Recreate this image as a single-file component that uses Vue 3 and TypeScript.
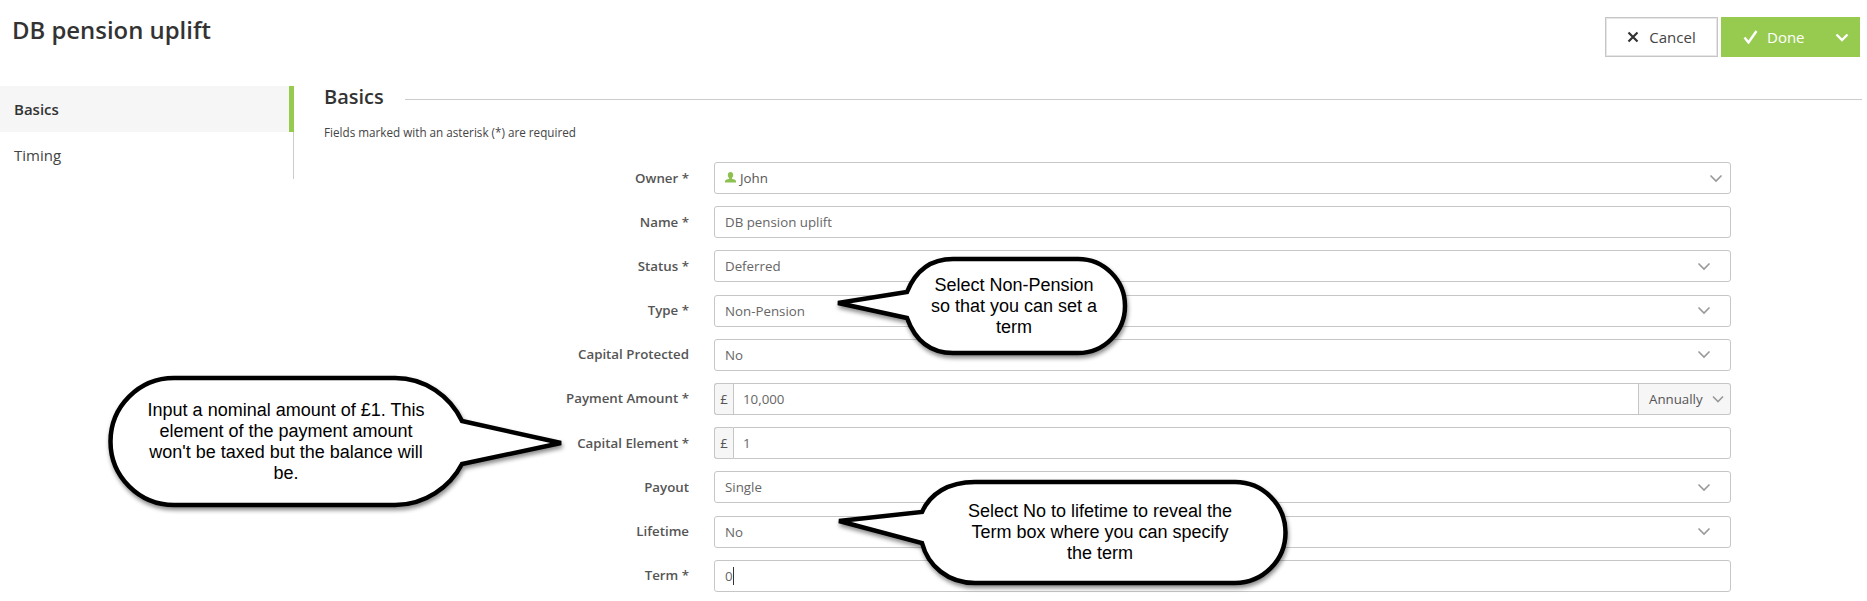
<script setup lang="ts">
interface Row {
  label: string
  kind: 'select' | 'input' | 'money' | 'owner'
  value: string
  period?: string
  caret?: boolean
}
const rows: Row[] = [
  { label: 'Owner *', kind: 'owner', value: 'John' },
  { label: 'Name *', kind: 'input', value: 'DB pension uplift' },
  { label: 'Status *', kind: 'select', value: 'Deferred' },
  { label: 'Type *', kind: 'select', value: 'Non-Pension' },
  { label: 'Capital Protected', kind: 'select', value: 'No' },
  { label: 'Payment Amount *', kind: 'money', value: '10,000', period: 'Annually' },
  { label: 'Capital Element *', kind: 'money', value: '1' },
  { label: 'Payout', kind: 'select', value: 'Single' },
  { label: 'Lifetime', kind: 'select', value: 'No' },
  { label: 'Term *', kind: 'input', value: '0', caret: true },
]
</script>

<template>
  <div class="page">
    <header class="top">
      <h1 class="title">DB pension uplift</h1>
      <div class="actions">
        <button class="btn cancel">
          <svg width="12" height="12" viewBox="0 0 12 12"><path d="M1.500 1.500l9 9M10.500 1.500l-9 9" stroke="#333" stroke-width="2.200" fill="none" /></svg>
          <span>Cancel</span>
        </button>
        <button class="btn done">
          <span class="done-main">
            <svg width="15" height="14" viewBox="0 0 15 14"><path d="M1.500 7.500l4 5L13.500 1" stroke="#fff" stroke-width="2.400" fill="none" /></svg>
            <span>Done</span>
          </span>
          <svg width="14" height="9" viewBox="0 0 14 9"><path d="M1.500 1.500L7 7l5.500-5.500" stroke="#fff" stroke-width="2.400" fill="none" /></svg>
        </button>
      </div>
    </header>
    <div class="body">
      <nav class="side">
        <div class="tab active">Basics</div>
        <div class="tab">Timing</div>
      </nav>
      <main class="content">
        <div class="section">
          <h2>Basics</h2>
          <span class="rule"></span>
        </div>
        <p class="hint">Fields marked with an asterisk (*) are required</p>
        <div class="form">
          <div v-for="r in rows" :key="r.label" class="row">
            <label class="lbl">{{ r.label }}</label>
            <div class="ctl">
              <template v-if="r.kind === 'money'">
                <span class="addon">£</span>
                <span class="field money" :class="{ joined: r.period }">{{ r.value }}</span>
                <span v-if="r.period" class="period">
                  {{ r.period }}
                  <svg width="12" height="8" viewBox="0 0 12 8"><path d="M1 1.500l5 5 5-5" stroke="#999" stroke-width="1.600" fill="none" /></svg>
                </span>
              </template>
              <span v-else class="field">
                <svg v-if="r.kind === 'owner'" class="user" width="11" height="11" viewBox="0 0 11 11"><path d="M5.500 0C7.100 0 8.200 1.300 8.200 3 8.200 4.300 7.600 5.400 6.900 5.900V6.800C8.500 7.300 11 7.800 11 9.200V10.500H0V9.200C0 7.800 2.500 7.300 4.100 6.800V5.900C3.400 5.400 2.800 4.300 2.800 3 2.800 1.300 3.900 0 5.500 0Z" fill="#8cc152" /></svg>
                <span :class="{ dark: r.kind === 'owner', caret: r.caret }">{{ r.value }}</span>
                <svg v-if="r.kind !== 'input'" class="chev" :class="{ far: r.kind === 'owner' }" width="14" height="9" viewBox="0 0 14 9"><path d="M1.500 1.500L7 7l5.500-5.500" stroke="#999" stroke-width="1.600" fill="none" /></svg>
              </span>
            </div>
          </div>
        </div>
      </main>
    </div>

    <svg class="bubbles" width="1867" height="601" viewBox="0 0 1867 601">
      <path d="M907 292C915 272 930 259 953 259H1078A47 47 0 0 1 1078 353H953C930 353 915 340 907 318L838 303Z" />
      <path d="M462 421C450 396 425 378 395 378H174A63.500 63.500 0 0 0 174 505H395C425 505 450 487 462 464L561 443Z" />
      <path d="M922 512C930 494 948 482 975 482H1235A50.500 50.500 0 0 1 1235 583H975C948 583 928 566 922 543L839 521Z" />
    </svg>
    <div class="say say-a">Select Non-Pension<br />so that you can set a<br />term</div>
    <div class="say say-b">Input a nominal amount of £1. This<br />element of the payment amount<br />won't be taxed but the balance will<br />be.</div>
    <div class="say say-c">Select No to lifetime to reveal the<br />Term box where you can specify<br />the term</div>
  </div>
</template>

<style scoped>
.page {
  position: relative;
  width: 1867px;
  height: 601px;
  overflow: hidden;
  background: #fff;
  font-family: "Open Sans", sans-serif;
  font-size: 13.300px;
  color: #333;
}
.top {
  display: flex;
  justify-content: space-between;
  height: 86px;
  padding: 16px 7px 0 12px;
  box-sizing: border-box;
}
.title {
  margin: 0;
  font-size: 23.900px;
  font-weight: 600;
  line-height: 28px;
  color: #333;
}
.actions {
  display: flex;
  gap: 3px;
  height: 40px;
  margin-top: 1px;
}
.btn {
  display: flex;
  align-items: center;
  font: inherit;
  font-size: 15px;
  height: 40px;
  border: 0;
  padding: 0;
}
.cancel {
  width: 113px;
  justify-content: center;
  gap: 10px;
  background: #fff;
  border: 1px solid #c6c6c6;
  box-shadow: inset 0 0 0 1px #e6e6e6;
  color: #444;
}
.done {
  width: 139px;
  background: #97cb4f;
  color: #fff;
  justify-content: space-between;
  padding: 0 11px 0 22px;
  box-sizing: border-box;
}
.done-main {
  display: flex;
  align-items: center;
  gap: 9px;
}
.body {
  display: flex;
}
.side {
  width: 294px;
  height: 93px;
  flex: none;
  border-right: 1px solid #ccc;
  box-sizing: border-box;
}
.tab {
  height: 46px;
  display: flex;
  align-items: center;
  padding-left: 14px;
  font-size: 15px;
  color: #444;
}
.active {
  background: #f6f6f6;
  border-right: 5px solid #97cb4f;
  margin-right: -1px;
  font-weight: 600;
  color: #333;
}
.content {
  flex: 1;
  padding: 0 5px 0 30px;
  min-width: 0;
}
.section {
  display: flex;
  align-items: center;
  gap: 21px;
  height: 24px;
}
.section h2 {
  margin: -2px 0 0;
  font-size: 20px;
  font-weight: 600;
  color: #333;
  line-height: 24px;
}
.rule {
  flex: 1;
  height: 1px;
  margin-top: 2px;
  background: #ccc;
}
.hint {
  margin: 14px 0 0;
  font-size: 11.700px;
  line-height: 16px;
  color: #444;
}
.form {
  margin: 22px 131px 0 0;
  display: flex;
  flex-direction: column;
  gap: 12.200px;
}
.row {
  display: flex;
  align-items: center;
  height: 32px;
}
.lbl {
  width: 365px;
  flex: none;
  text-align: right;
  font-weight: 600;
  color: #555;
  margin: -1px 25px 0 0;
}
.ctl {
  flex: 1;
  display: flex;
  min-width: 0;
  height: 32px;
  color: #666;
}
.field {
  flex: 1;
  display: flex;
  align-items: center;
  box-sizing: border-box;
  border: 1px solid #c6c6c6;
  border-radius: 3px;
  padding: 0 10px;
  color: #666;
  background: #fff;
}
.dark {
  color: #555;
}
.user {
  margin-right: 4px;
  margin-top: -2px;
}
.chev {
  margin-left: auto;
  margin-right: 9px;
}
.chev.far {
  margin-right: -3px;
}
.caret {
  border-right: 1px solid #333;
  padding-right: 0;
}
.addon {
  width: 19px;
  flex: none;
  box-sizing: border-box;
  display: flex;
  align-items: center;
  justify-content: center;
  background: #f6f6f6;
  border: 1px solid #c6c6c6;
  border-right: 0;
  border-radius: 3px 0 0 3px;
  color: #555;
}
.money {
  border-radius: 0 3px 3px 0;
  padding-left: 9px;
}
.money.joined {
  border-radius: 0;
}
.period {
  width: 92px;
  flex: none;
  box-sizing: border-box;
  display: flex;
  align-items: center;
  justify-content: space-between;
  padding: 0 6px 0 10px;
  background: #f6f6f6;
  border: 1px solid #c6c6c6;
  border-left: 0;
  border-radius: 0 3px 3px 0;
  color: #555;
}
.bubbles {
  position: absolute;
  left: 0;
  top: 0;
  pointer-events: none;
}
.bubbles path {
  fill: #fff;
  stroke: #000;
  stroke-width: 4.500;
  stroke-linejoin: miter;
  filter: drop-shadow(1px 3px 2px rgba(0, 0, 0, 0.45));
}
.say {
  position: absolute;
  transform: translateX(-50%);
  text-align: center;
  white-space: nowrap;
  font-family: "Liberation Sans", Arial, sans-serif;
  font-size: 18px;
  line-height: 21px;
  color: #000;
}
.say-a {
  left: 1014px;
  top: 275px;
}
.say-b {
  left: 286px;
  top: 400px;
}
.say-c {
  left: 1100px;
  top: 501px;
}
</style>
